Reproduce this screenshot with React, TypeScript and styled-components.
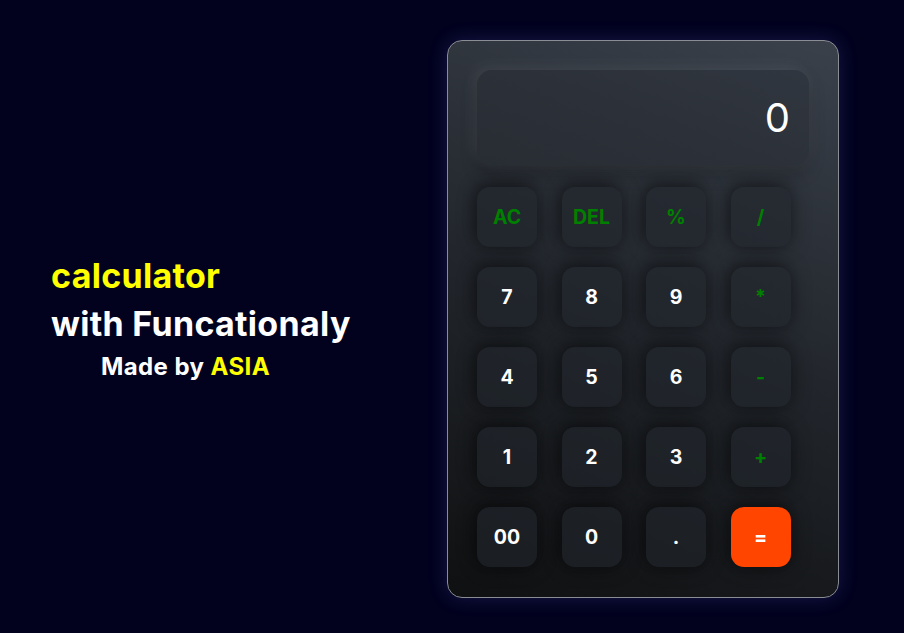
import React from "react";
import styled, { createGlobalStyle } from "styled-components";

const Global = createGlobalStyle`
  html, body { margin: 0; padding: 0; }
  body {
    background: #02021f;
    font-family: Inter, "Open Sans", sans-serif;
  }
`;

const Page = styled.div`
  height: 633px;
  display: flex;
  align-items: center;
  padding-left: 51px;
  padding-top: 4px;
  gap: 96px;
  box-sizing: border-box;
`;

const Intro = styled.div`
  display: flex;
  flex-direction: column;
  width: 300px;
  margin-top: 0px;
`;

const Title = styled.div<{ $color: string }>`
  font-size: 34px;
  font-weight: 700;
  color: ${(p) => p.$color};
  line-height: 48px;
  letter-spacing: 0.3px;
  white-space: nowrap;
`;

const Credit = styled.div`
  font-size: 24px;
  font-weight: 700;
  color: #ffffff;
  padding-left: 50px;
  line-height: 38px;
  letter-spacing: 0.4px;
  white-space: nowrap;
`;

const Accent = styled.span`
  color: #ffff00;
`;

const Card = styled.div`
  width: 392px;
  height: 558px;
  box-sizing: border-box;
  padding: 29px 29px;
  border: 1px solid #8a8d94;
  border-radius: 15px;
  background: linear-gradient(20deg, #0f1011 0%, #22262c 50%, #3a414b 100%);
  box-shadow: 0 0 18px rgba(90, 90, 200, 0.25);
  display: flex;
  flex-direction: column;
  gap: 21px;
`;

const Display = styled.div`
  height: 96px;
  border-radius: 15px;
  background: linear-gradient(20deg, #282c33 0%, #30363f 100%);
  box-shadow: -4px -4px 14px rgba(255, 255, 255, 0.07), 4px 4px 14px rgba(255, 255, 255, 0.04),
    0 8px 16px rgba(0, 0, 0, 0.25);
  display: flex;
  align-items: center;
  justify-content: flex-end;
  padding-right: 19px;
  font-size: 40px;
  font-weight: 400;
  color: #ffffff;
`;

const Keys = styled.div`
  display: grid;
  grid-template-columns: repeat(4, 60px);
  grid-auto-rows: 60px;
  column-gap: 24.5px;
  row-gap: 20px;
`;

const Key = styled.div<{ $kind: "num" | "op" | "eq" }>`
  border-radius: 13px;
  display: flex;
  align-items: center;
  justify-content: center;
  font-size: 19.5px;
  font-weight: 700;
  color: ${(p) => (p.$kind === "op" ? "#008000" : "#ffffff")};
  background: ${(p) => (p.$kind === "eq" ? "#ff4500" : "rgba(34, 38, 45, 0.6)")};
  box-shadow: 0 0 20px rgba(0, 0, 0, 0.45), -4px -4px 12px rgba(0, 0, 0, 0.2);
`;

const keys: { label: string; kind: "num" | "op" | "eq" }[] = [
  { label: "AC", kind: "op" },
  { label: "DEL", kind: "op" },
  { label: "%", kind: "op" },
  { label: "/", kind: "op" },
  { label: "7", kind: "num" },
  { label: "8", kind: "num" },
  { label: "9", kind: "num" },
  { label: "*", kind: "op" },
  { label: "4", kind: "num" },
  { label: "5", kind: "num" },
  { label: "6", kind: "num" },
  { label: "-", kind: "op" },
  { label: "1", kind: "num" },
  { label: "2", kind: "num" },
  { label: "3", kind: "num" },
  { label: "+", kind: "op" },
  { label: "00", kind: "num" },
  { label: "0", kind: "num" },
  { label: ".", kind: "num" },
  { label: "=", kind: "eq" },
];

export default function App() {
  return (
    <>
      <Global />
      <Page>
        <Intro>
          <Title $color="#ffff00">calculator</Title>
          <Title $color="#ffffff">with Funcationaly</Title>
          <Credit>
            Made by <Accent>ASIA</Accent>
          </Credit>
        </Intro>
        <Card>
          <Display>0</Display>
          <Keys>
            {keys.map((k) => (
              <Key key={k.label} $kind={k.kind}>
                {k.label}
              </Key>
            ))}
          </Keys>
        </Card>
      </Page>
    </>
  );
}
